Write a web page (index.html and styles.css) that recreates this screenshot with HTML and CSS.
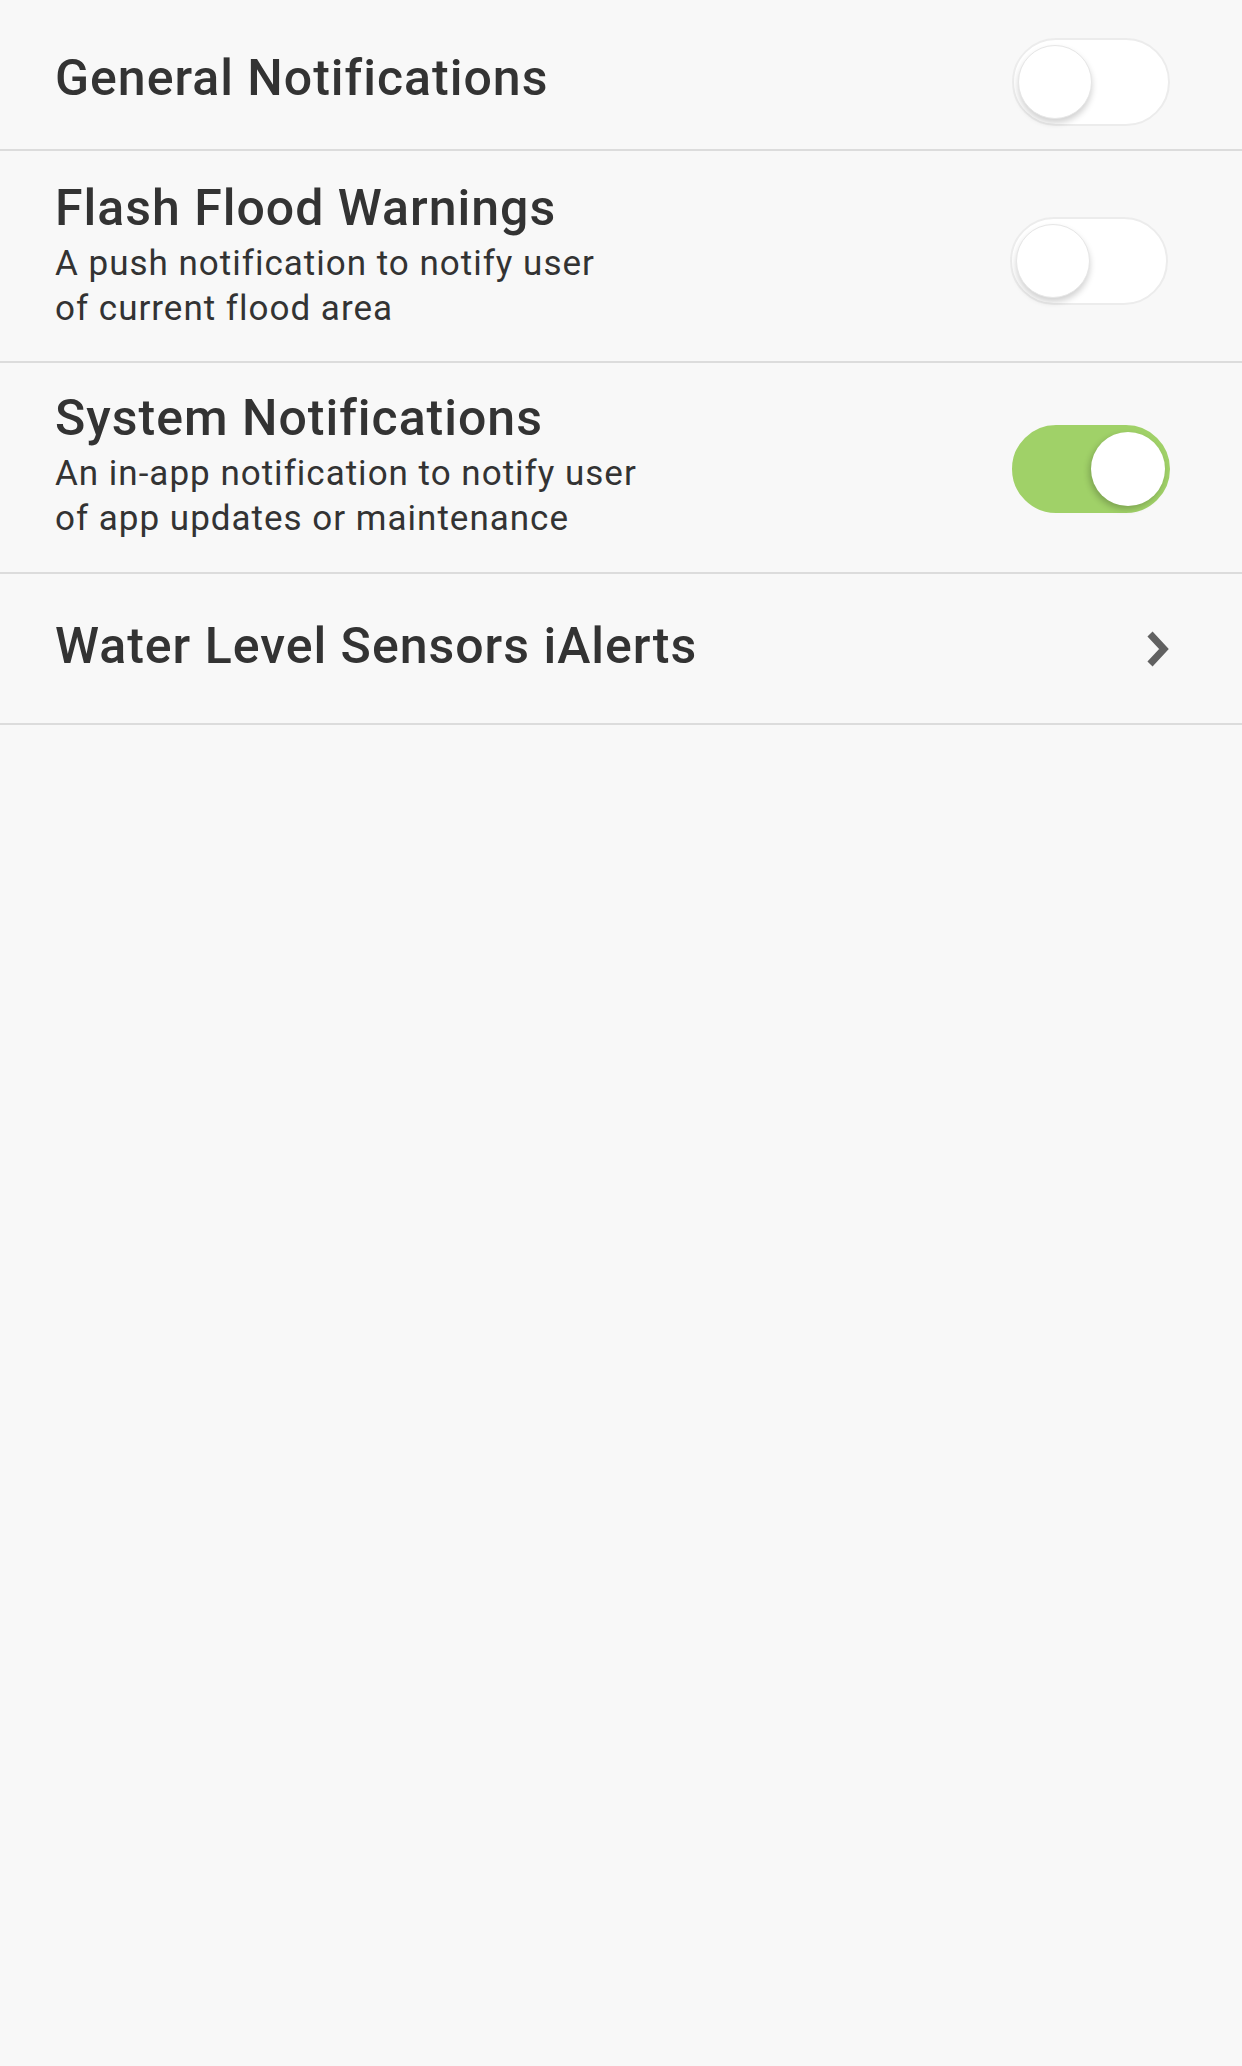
FILE: index.html
```html
<!DOCTYPE html>
<html>
<head>
<meta charset="utf-8">
<link rel="stylesheet" href="styles.css">
</head>
<body>
<div class="list">
  <div class="row row-single row-first">
    <div class="text"><div class="title">General Notifications</div></div>
    <div class="toggle"><div class="knob"></div></div>
  </div>
  <div class="row row-double">
    <div class="text">
      <div class="title">Flash Flood Warnings</div>
      <div class="desc">A push notification to notify user<br>of current flood area</div>
    </div>
    <div class="toggle toggle-shift"><div class="knob"></div></div>
  </div>
  <div class="row row-double row-third">
    <div class="text">
      <div class="title">System Notifications</div>
      <div class="desc">An in-app notification to notify user<br>of app updates or maintenance</div>
    </div>
    <div class="toggle on"><div class="knob"></div></div>
  </div>
  <div class="row row-single row-link">
    <div class="text"><div class="title">Water Level Sensors iAlerts</div></div>
    <svg class="chev" width="24" height="36" viewBox="0 0 24 36"><path d="M4 3 L18 18 L4 33" fill="none" stroke="#616161" stroke-width="7"/></svg>
  </div>
</div>
</body>
</html>
```
FILE: styles.css
```css
html, body {
  margin: 0;
  padding: 0;
  background: #f8f8f8;
}
body {
  width: 1242px;
  height: 2066px;
  font-family: Roboto, "Noto Sans", sans-serif;
  color: #333333;
}
.list {
  display: flex;
  flex-direction: column;
}
.row {
  display: flex;
  align-items: center;
  justify-content: space-between;
  padding: 0 72px 0 55px;
  border-bottom: 2px solid #dcdcdc;
  box-sizing: border-box;
}
.row-single {
  height: 151px;
}
.row-double {
  height: 212px;
  align-items: flex-start;
  padding-top: 32px;
}
.row-third {
  padding-top: 30px;
  height: 211px;
}
.title {
  font-size: 50px;
  font-weight: 500;
  line-height: 56px;
  letter-spacing: 1px;
}
.row-double .title {
  margin-top: -3px;
}
.row-first .title {
  margin-top: 7px;
}
.row-first .toggle {
  margin-top: 14px;
}
.row-link .title {
  margin-top: -6px;
}
.desc {
  font-size: 35px;
  line-height: 45px;
  margin-top: 5px;
  letter-spacing: 1px;
}
.toggle {
  width: 158px;
  height: 88px;
  border-radius: 44px;
  background: #ffffff;
  border: 2px solid #ececec;
  box-sizing: border-box;
  display: flex;
  align-items: center;
  padding: 0 4px;
  flex-shrink: 0;
}
.row-double .toggle {
  margin-top: 34px;
}
.row-third .toggle {
  margin-top: 32px;
}
.toggle-shift {
  margin-right: 2px;
}
.knob {
  width: 74px;
  height: 74px;
  border-radius: 50%;
  background: #ffffff;
  border: 1px solid #e6e6e6;
  box-sizing: border-box;
  box-shadow: 0 4px 6px rgba(0, 0, 0, 0.18);
}
.toggle.on {
  background: #a0d168;
  border-color: #a0d168;
  justify-content: flex-end;
  padding: 0 3px;
}
.toggle.on .knob {
  border: none;
  box-shadow: -2px 3px 6px rgba(0, 0, 0, 0.22);
}
.chev {
  display: block;
  margin-top: 0;
}
```
